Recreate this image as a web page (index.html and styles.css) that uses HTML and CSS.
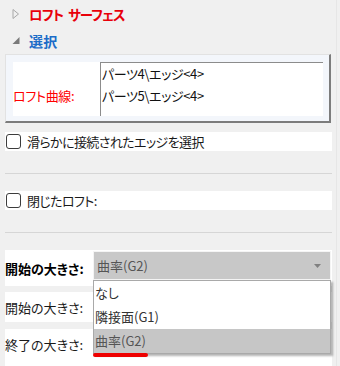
FILE: index.html
```html
<!DOCTYPE html>
<html lang="ja">
<head>
    <meta charset="UTF-8">
    <meta name="viewport" content="width=device-width, initial-scale=1.0">
    <title>ロフト サーフェス</title>
    <link rel="stylesheet" href="styles.css">
</head>
<body>
    <div class="panel">
        <div class="section-head">
            <svg class="twisty" width="7" height="10" viewBox="0 0 7 10"><path d="M0.5 0.5 L6 5 L0.5 9.5 Z" fill="none" stroke="#a8a8a8" stroke-width="1"/></svg>
            <span class="title-red">ロフト サーフェス</span>
        </div>
        <div class="section-head">
            <svg class="twisty" width="7" height="7" viewBox="0 0 7 7"><path d="M7 0 L7 7 L0 7 Z" fill="#7a7a7a"/></svg>
            <span class="title-blue">選択</span>
        </div>

        <div class="select-box">
            <div class="select-inner">
                <div class="curve-label">ロフト曲線:</div>
                <ul class="curve-list">
                    <li>パーツ4\エッジ&lt;4&gt;</li>
                    <li>パーツ5\エッジ&lt;4&gt;</li>
                </ul>
            </div>
        </div>

        <label class="check-row first">
            <input type="checkbox">
            <span>滑らかに接続されたエッジを選択</span>
        </label>
        <div class="separator"></div>

        <label class="check-row">
            <input type="checkbox">
            <span>閉じたロフト:</span>
        </label>
        <div class="separator"></div>

        <div class="size-rows">
            <div class="size-row active">
                <span class="size-label bold">開始の大きさ:</span>
                <div class="combo">
                    <span>曲率(G2)</span>
                    <svg width="7" height="4" viewBox="0 0 7 4"><path d="M0 0 L7 0 L3.5 4 Z" fill="#808080"/></svg>
                </div>
            </div>
            <div class="size-row">
                <span class="size-label">開始の大きさ:</span>
            </div>
            <div class="size-row last">
                <span class="size-label">終了の大きさ:</span>
            </div>

            <ul class="dropdown">
                <li>なし</li>
                <li>隣接面(G1)</li>
                <li class="selected">曲率(G2)</li>
            </ul>
            <div class="red-mark"></div>
        </div>
    </div>
</body>
</html>
```

FILE: styles.css
```css
* {
    margin: 0;
    padding: 0;
    box-sizing: border-box;
}

body {
    width: 340px;
    height: 366px;
    overflow: hidden;
    background: #f0f0f0;
    font-family: "Noto Sans CJK JP", "Noto Sans", sans-serif;
    font-feature-settings: "palt";
    font-size: 13px;
    color: #1a1a1a;
}

.panel {
    width: 337px;
    height: 366px;
    border-right: 1px solid #e6e6e6;
}

.section-head {
    height: 27px;
    display: flex;
    align-items: center;
    padding-left: 10px;
}

.twisty {
    width: 12px;
    flex: none;
}

.section-head:last-of-type .twisty {
    margin-left: 1px;
}

.title-red,
.title-blue {
    margin-left: 7px;
    font-size: 14px;
    font-weight: bold;
}

.title-red {
    color: #e8000a;
    font-size: 13.5px;
    letter-spacing: -1px;
    word-spacing: 3px;
}

.title-blue {
    color: #1c6cc8;
    letter-spacing: 0.3px;
}

.select-box {
    margin-left: 5px;
    width: 326px;
    height: 69px;
    background: #f3f6fb;
    border-top: 1px solid #e2e2e2;
    border-left: 1px solid #e2e2e2;
    border-right: 2px solid #7c7c7c;
    border-bottom: 2px solid #7c7c7c;
    padding: 7px 6px 5px 7px;
}

.select-inner {
    height: 100%;
    background: #fff;
    display: flex;
}

.curve-label {
    width: 87px;
    color: #ff0000;
    align-self: center;
    margin-top: 13px;
    letter-spacing: -0.3px;
}

.curve-list {
    flex: 1;
    list-style: none;
    border-top: 1px solid #8c8c8c;
    border-left: 1px solid #8c8c8c;
    padding-left: 1px;
}

.curve-list li {
    height: 22px;
    line-height: 22px;
    color: #111;
    letter-spacing: -0.4px;
}

.check-row {
    display: flex;
    align-items: center;
    gap: 6px;
    margin-left: 5px;
    width: 327px;
    height: 19px;
    background: #fff;
    margin-top: 17px;
    letter-spacing: -0.6px;
}

.check-row.first {
    margin-top: 9px;
}

.check-row input {
    appearance: none;
    width: 15px;
    height: 15px;
    margin-left: 1px;
    border: 1px solid #3c3c3c;
    border-radius: 3px;
    background: #fff;
}

.separator {
    margin: 22px 0 0 5px;
    width: 327px;
    height: 1px;
    background: #d6d6d6;
}

.size-rows {
    position: relative;
    margin-top: 17px;
    margin-left: 5px;
    width: 327px;
}

.size-row {
    display: flex;
    align-items: center;
    height: 30px;
    background: #fff;
    margin-bottom: 7px;
}

.size-row.active {
    height: 36px;
    margin-bottom: 6px;
}

.size-row.last {
    height: 40px;
    align-items: flex-start;
    padding-top: 6px;
}

.size-label {
    width: 88px;
    flex: none;
}

.size-label.bold {
    font-weight: bold;
    color: #000;
}

.combo {
    width: 238px;
    height: 29px;
    margin-top: 1px;
    align-self: flex-start;
    background: #c8c8c8;
    border: 1px solid #f4f4f4;
    display: flex;
    align-items: center;
    justify-content: space-between;
    padding: 0 9px 0 3px;
    color: #555;
}

.dropdown {
    position: absolute;
    left: 88px;
    top: 30px;
    width: 238px;
    list-style: none;
    background: #fff;
    border: 1px solid #a9a9a9;
    box-shadow: 2px 2px 2px rgba(0, 0, 0, 0.3);
}

.dropdown li {
    height: 24px;
    line-height: 24px;
    padding-left: 1px;
    color: #333;
}

.dropdown li.selected {
    background: #c6c6c6;
    color: #555;
}

.red-mark {
    position: absolute;
    left: 88px;
    top: 103px;
    width: 55px;
    height: 4px;
    border-radius: 2px;
    background: #ee0000;
}
```
